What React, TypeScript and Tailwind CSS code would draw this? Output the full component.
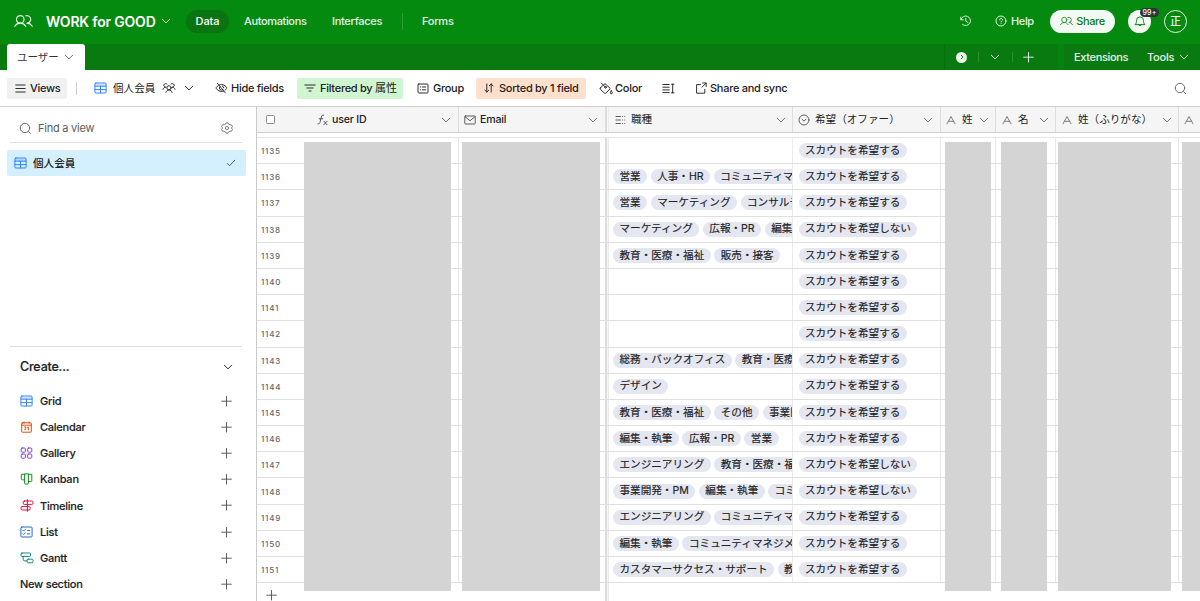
import React from 'react';

type P = { className?: string; children?: React.ReactNode };

const Ico = ({ className = '', children, vb = '0 0 16 16', sw = 0.95 }: P & { vb?: string; sw?: number }) => (
  <svg viewBox={vb} fill="none" stroke="currentColor" strokeWidth={sw} strokeLinecap="round" strokeLinejoin="round" className={'block shrink-0 ' + className}>
    {children}
  </svg>
);

const Chevron = ({ className = '' }: P) => (
  <Ico vb="0 0 10 10" className={'size-2.5 ' + className}><path d="M1.3 3.200 5 6.900l3.700-3.700" /></Ico>
);
const Plus = ({ className = '' }: P) => (
  <Ico vb="0 0 12 12" className={'size-3 ' + className}><path d="M6.500 1.500v9.500M1.700 6.200h9.600" /></Ico>
);
const People = ({ className = '' }: P) => (
  <Ico vb="0 0 20 14" className={className} sw={1.2}>
    <circle cx="6.6" cy="5.3" r="4" />
    <path d="M.8 12.6c1.3-2.1 3.3-3.3 5.8-3.3s4.500 1.200 5.800 3.300M12.300 1.500a4 4 0 1 1 1.300 7.800c2.400 0 4.300 1.200 5.600 3.300" />
  </Ico>
);
const GridIcon = ({ className = '' }: P) => (
  <Ico vb="0 0 13 12" className={'h-3 w-[13px] ' + className}>
    <path d="M1 1.500h11v2.700H1z" fill="currentColor" fillOpacity=".2" stroke="none" />
    <rect x=".9" y="1" width="11.200" height="10" rx="1" />
    <path d="M1 4.200h11M1 7.600h11M6.500 4.200v6.800" />
  </Ico>
);
const Search = ({ className = '' }: P) => (
  <Ico vb="0 0 13 13" className={'size-[13px] ' + className}><circle cx="6" cy="6" r="4.700" /><path d="m9.500 9.500 2.300 2.300" /></Ico>
);
const LetterA = () => (
  <Ico vb="0 0 10 10" className="mr-px size-2.5 text-[#777]"><path d="M1 8.800 5 1.500l4 7.300M2.500 6.300h5" /></Ico>
);

function TopBar() {
  return (
    <header className="flex h-11 shrink-0 items-center bg-[#048a0e] pb-[2px] pl-[14px] pr-[13px] text-[11px] font-medium tracking-[-0.360px] text-white/90">
      <People className="h-[14px] w-[19px]" />
      <span className="ml-[13px] w-[111px] whitespace-nowrap text-[14px] font-semibold tracking-[-0.200px] text-white">WORK for GOOD</span>
      <Chevron className="ml-1" />
      <span className="ml-[15px] flex h-[23px] w-[43px] items-center justify-center rounded-full bg-[#0a7411] tracking-[-0.100px] text-white">Data</span>
      <span className="ml-[15px] w-[63px]">Automations</span>
      <span className="ml-[25px] w-[51px] tracking-[-0.300px]">Interfaces</span>
      <span className="ml-[19px] h-[17px] w-px bg-[#2f9c37]" />
      <span className="ml-[19px] tracking-[-0.250px]">Forms</span>
      <div className="ml-auto flex items-center">
        <Ico vb="0 0 12 12" className="mr-px size-3"><path d="M.8 2.200v2.600h2.600M1 4.600A4.800 4.800 0 1 1 2.600 9.500M5.800 3.400v2.800l2.200 1.300" /></Ico>
        <Ico vb="0 0 12 12" className="ml-[22px] size-3"><circle cx="6" cy="6" r="5" /><path d="M4.600 4.800c0-2 2.900-1.800 2.900 0 0 1-1.500 1.100-1.500 2.100M6 8.600v.1" /></Ico>
        <span className="ml-1 w-[23px]">Help</span>
        <span className="ml-[16px] flex h-[23px] w-[65px] items-center justify-center gap-[3px] rounded-full bg-[#f3faf3] text-[#0a7b14]">
          <People className="h-[10px] w-[13px]" />Share
        </span>
        <div className="relative ml-[13px] flex size-[23px] items-center justify-center rounded-full bg-[#f3faf3] text-[#0a7b14]">
          <Ico vb="0 0 12 13" className="h-[13px] w-3"><path d="M1.300 9.400c.9-.9 1.200-2 1.200-4a3.500 3.500 0 0 1 7 0c0 2 .3 3.100 1.200 4zM4.600 9.600a1.450 1.450 0 0 0 2.800 0" /></Ico>
          <span className="absolute -top-[2px] left-3 flex h-[9px] w-[19px] items-center justify-center rounded-full bg-[#2c3438] text-[7px] font-medium leading-none tracking-[0.200px] text-white">99+</span>
        </div>
        <span className="ml-[13px] flex size-[23px] items-center justify-center rounded-full border border-white/90 text-[11px] leading-none tracking-[0px]">正</span>
      </div>
    </header>
  );
}

function TableTabs() {
  return (
    <div className="flex h-[26px] shrink-0 bg-[#087a10] text-[11px] font-medium tracking-[-0.340px] text-white/90">
      <div className="ml-[7px] flex w-[78px] items-center rounded-t-[3px] bg-white pl-[10px] text-[#333]">
        <span className="w-[42px] whitespace-nowrap pt-[2px] text-[10.500px] font-normal tracking-[0px]">ユーザー</span>
        <Chevron className="ml-[5px] text-[#666]" />
      </div>
      <div className="ml-auto flex w-[114px] items-center border-l border-[#06700d] pl-[11px]">
        <span className="flex size-[11px] items-center justify-center rounded-full bg-[#eaf6ea] text-[#087a10]">
          <Ico vb="0 0 6 6" className="size-[6px]"><path d="M2.200 1.200 4 3 2.200 4.800" /></Ico>
        </span>
        <span className="ml-[11px] h-[10px] w-px bg-[#2a8f31]" />
        <Chevron className="ml-[11px]" />
        <span className="ml-[12px] h-[10px] w-px bg-[#2a8f31]" />
        <Plus className="ml-[9px] size-3" />
      </div>
      <div className="w-[6px] bg-[#07820f]" />
      <div className="flex w-[136px] items-center pl-[10px]">
        <span className="w-[54px]">Extensions</span>
        <span className="ml-[19px] w-[27px] tracking-[-0.200px]">Tools</span>
        <Chevron className="ml-[5px]" />
      </div>
    </div>
  );
}

function Toolbar() {
  return (
    <div className="flex h-[37px] shrink-0 items-center whitespace-nowrap border-b border-[#cfcfcf] bg-white pl-[7px] pr-[13px] text-[11px] font-medium tracking-[-0.280px] text-[#222]">
      <div className="flex h-[21px] w-[60px] items-center rounded-[2px] bg-[#f1f1f1] pl-2">
        <Ico vb="0 0 11 11" className="size-[11px]"><path d="M.8 2h9.400M.8 5.500h9.400M.8 9h9.400" /></Ico>
        <span className="ml-1">Views</span>
      </div>
      <span className="ml-[9px] h-[13px] w-px bg-[#ccc]" />
      <GridIcon className="ml-[17px] text-[#2d7ff9]" />
      <span className="ml-[6px] w-[43px] pt-px text-[10.600px] font-normal tracking-[0px]">個人会員</span>
      <Ico vb="0 0 14 12" className="ml-[6px] h-3 w-[14px]">
        <circle cx="7" cy="5.800" r="2.100" />
        <path d="M3.900 10.400c.5-1.500 1.700-2.500 3.100-2.500s2.600 1 3.100 2.500M3.900 5.300A1.900 1.900 0 1 1 5 2M1 7.300c.4-1.200 1.200-2 2.400-2M10.100 5.300A1.900 1.900 0 1 0 9 2M13 7.300c-.4-1.200-1.200-2-2.400-2" />
      </Ico>
      <Chevron className="ml-[8px]" />
      <Ico vb="0 0 13 12" className="ml-[21px] h-3 w-[13px]">
        <path d="M2.300 1.200 10.300 10.800M4.400 2.900A6 6 0 0 1 6.500 2.500c3.600 0 5.500 3.500 5.500 3.500s-.7 1.300-2 2.300M8.500 9.200a6 6 0 0 1-2 .3C2.900 9.500 1 6 1 6s.8-1.500 2.300-2.500M8.100 7.600a2.200 2.200 0 0 1-3.200-3M7.300 3.900A2.200 2.200 0 0 1 8.700 5.800" />
      </Ico>
      <span className="ml-[3px] w-[53px]">Hide fields</span>
      <div className="ml-[13px] flex h-[21px] w-[106px] items-center rounded-[2px] bg-[#cff5d1] pl-[7px]">
        <Ico vb="0 0 12 10" className="h-[10px] w-3"><path d="M.8 2h10.400M2.800 5h6.400M4.900 8h2.200" /></Ico>
        <span className="ml-[4px]">Filtered by <span className="font-normal tracking-[0px]">属性</span></span>
      </div>
      <Ico vb="0 0 12 11" className="ml-[14px] h-[11px] w-3"><rect x="1" y="1" width="10" height="9" rx=".8" /><path d="M3.300 4h.3M5.300 4h3.400M3.300 6.800h.3M5.300 6.800h3.400" /></Ico>
      <span className="ml-1 w-[31px]">Group</span>
      <div className="ml-[12px] flex h-[21px] w-[110px] items-center rounded-[2px] bg-[#ffe0cc] pl-2">
        <Ico vb="0 0 10 10" className="size-2.5"><path d="M2.800 1v8M.9 7.200 2.800 9l1.900-1.800M7.200 9V1M5.300 2.800 7.200 1l1.900 1.800" /></Ico>
        <span className="ml-[5px]">Sorted by 1 field</span>
      </div>
      <Ico vb="0 0 14 13" className="ml-[13px] h-[13px] w-[14px]">
        <path d="M2.300 1 5.800 4.500M1.300 6 6 1.600l5.300 5-4.600 4.600a.8.800 0 0 1-1.200 0L1.300 7.200a.8.800 0 0 1 0-1.200zM12.300 8.800s1 1.200 1 2a1 1 0 0 1-2 0c0-.8 1-2 1-2z" /><circle cx="6.400" cy="5.200" r=".9" />
      </Ico>
      <span className="ml-[2px] w-[27px]">Color</span>
      <Ico vb="0 0 13 11" className="ml-[20px] h-[11px] w-[13px]"><path d="M.8 1.500h6.400M.8 4.200h6.400M.8 6.900h6.400M.8 9.600h6.400M10.700 1.200v8.600M9.500 1.200h2.400M9.500 9.800h2.400" /></Ico>
      <Ico vb="0 0 12 12" className="ml-[20px] size-3"><path d="M5.500 2.600H1.600v8.600h8.200V7.300M7.700 1h3.500v3.500M11 1.200 6.900 5.300" /></Ico>
      <span className="ml-[3px]">Share and sync</span>
      <Search className="ml-auto text-[#666]" />
    </div>
  );
}

const icons: Record<string, React.ReactNode> = {
  Grid: <GridIcon className="text-[#2d7ff9]" />,
  Calendar: (
    <Ico vb="0 0 13 12" className="h-3 w-[13px] text-[#d54401]"><rect x="1.700" y="1.800" width="9.600" height="9.400" rx=".6" /><path d="M1.700 4.200h9.600M4 .8v1.400M9 .8v1.400M4.600 6h1.500L5.300 7.200c1.200 0 1.100 1.900-.7 1.500M7.600 6.500l.8-.5v2.900" strokeWidth=".9" /></Ico>
  ),
  Gallery: (
    <Ico vb="0 0 13 12" className="h-3 w-[13px] text-[#7c39ed]"><rect x="1.200" y="1" width="4.200" height="4.200" rx="1" /><rect x="7.600" y="1" width="4.200" height="4.200" rx="1" /><rect x="1.200" y="7" width="4.200" height="4.200" rx="1" /><rect x="7.600" y="7" width="4.200" height="4.200" rx="1" /></Ico>
  ),
  Kanban: (
    <Ico vb="0 0 13 12" className="h-3 w-[13px] text-[#048a0e]"><path d="M4.600 1.300H1.300v4.500a1 1 0 0 0 1 1h2.300M4.600 1.300v8.800a1 1 0 0 0 1 1h1.800a1 1 0 0 0 1-1V1.300zM8.400 1.300h3.400v6.200a1 1 0 0 1-1 1H8.400" /></Ico>
  ),
  Timeline: (
    <Ico vb="0 0 14 13" className="h-[13px] w-[14px] text-[#dc043b]"><path d="M7.400.6v11.800" /><rect x="3.200" y="2" width="9.800" height="3.400" rx="1.200" /><rect x="1" y="7.600" width="9.200" height="3.400" rx="1.200" /></Ico>
  ),
  List: (
    <Ico vb="0 0 13 12" className="h-3 w-[13px] text-[#1f62d0]"><rect x=".9" y="1" width="11.200" height="10" rx="1" /><path d="m3 4.400.7.700 1.500-1.600M7.500 4.400h2.300M3 7.800l.7.700 1.500-1.600M7.500 7.800h2.300" /></Ico>
  ),
  Gantt: (
    <Ico vb="0 0 14 12" className="h-3 w-[14px] text-[#0d7f78]"><rect x="1" y="1" width="9.500" height="3.400" rx="1" /><rect x="7" y="7.200" width="6" height="3.600" rx="1.200" /><path d="M3.200 4.400v2.900a1.600 1.600 0 0 0 1.600 1.600H7" /></Ico>
  ),
};

function Sidebar() {
  return (
    <aside className="flex w-[257px] shrink-0 flex-col border-r border-[#cacaca] bg-white text-[11px] font-medium tracking-[-0.240px] text-[#1d1f25]">
      <div className="ml-[10px] mr-[14px] flex h-9 items-center border-b border-[#e2e2e2] pl-[9px] pr-[9px] pt-[7px]">
        <Search className="text-[#666]" />
        <span className="ml-[6px] font-normal text-[#5c5c5c]">Find a view</span>
        <Ico vb="0 0 12 12" className="ml-auto size-3 text-[#777]"><path d="M4.300 2.200 5 .9h2l.7 1.300 1.500.5 1.300.1.900 1.700-.9 1.500.9 1.500-.9 1.700-1.300.1-1.500.5L7 11.100H5l-.7-1.300-1.500-.5-1.300-.1-.9-1.700.9-1.500-.9-1.500.9-1.700 1.300-.1z" /><circle cx="6" cy="6" r="1.600" /></Ico>
      </div>
      <div className="ml-[7px] mt-[7px] flex h-[26px] w-[239px] items-center rounded-[2px] bg-[#d4effd] pl-[7px] pr-[10px]">
        <GridIcon className="text-[#2d7ff9]" />
        <span className="ml-[6px] pt-px text-[10.600px] tracking-[0px] text-[#222]">個人会員</span>
        <Ico vb="0 0 10 10" className="ml-auto size-2.5 text-[#555]"><path d="m1.200 5.500 2.300 2.300L8.800 2.200" /></Ico>
      </div>
      <div className="ml-[10px] mr-[14px] mt-auto border-t border-[#ddd]" />
      <div className="flex h-[41px] items-center pl-5 pr-[23px] text-[12.500px] tracking-[-0.200px] [-webkit-text-stroke:0.2px]">
        <span className="pt-px">Create...</span><Chevron className="ml-auto" />
      </div>
      <div className="pb-[4px] [-webkit-text-stroke:0.15px]">
        {Object.keys(icons).map((k) => (
          <div key={k} className="flex h-[26.200px] items-center pl-5 pr-[24px]">
            <span className="flex w-5 shrink-0">{icons[k]}</span>
            <span className="pt-px">{k}</span>
            <Plus className="ml-auto text-[#555]" />
          </div>
        ))}
        <div className="flex h-[26.200px] items-center pl-5 pr-[24px]">New section<Plus className="ml-auto text-[#555]" /></div>
      </div>
    </aside>
  );
}

const yes = 'スカウトを希望する';
const no = 'スカウトを希望しない';
const rows: [string[], string][] = [
  [[], yes],
  [['営業', '人事・HR', 'コミュニティマネジメント'], yes],
  [['営業', 'マーケティング', 'コンサルティング'], yes],
  [['マーケティング', '広報・PR', '編集・執筆'], no],
  [['教育・医療・福祉', '販売・接客'], yes],
  [[], yes],
  [[], yes],
  [[], yes],
  [['総務・バックオフィス', '教育・医療・福祉'], yes],
  [['デザイン'], yes],
  [['教育・医療・福祉', 'その他', '事業開発・PM'], yes],
  [['編集・執筆', '広報・PR', '営業'], yes],
  [['エンジニアリング', '教育・医療・福祉'], no],
  [['事業開発・PM', '編集・執筆', 'コミュニティマネジメント'], no],
  [['エンジニアリング', 'コミュニティマネジメント'], yes],
  [['編集・執筆', 'コミュニティマネジメント'], yes],
  [['カスタマーサクセス・サポート', '教育・医療・福祉'], yes],
];

const Chip = ({ children }: P) => (
  <span className="flex h-[15px] shrink-0 items-center whitespace-nowrap rounded-full bg-[#e4e6f0] px-[6.500px] pt-px text-[10.600px] font-normal leading-none text-[#222] [-webkit-text-stroke:0.15px]">{children}</span>
);

const HeadCell = ({ className = '', icon, label }: { className?: string; icon: React.ReactNode; label: string }) => (
  <div className={'flex shrink-0 items-center whitespace-nowrap border-r border-[#dedede] ' + className}>
    {icon}
    <span className="ml-[5px] pt-px">{label}</span>
    <Chevron className="ml-auto text-[#666]" />
  </div>
);

const Divider = () => <div className="w-1 shrink-0 border-l-2 border-r border-l-[#dcdcdc] border-r-[#ececec] bg-[#f7f7f7]" />;

function DataGrid() {
  return (
    <main className="relative min-w-0 flex-1 overflow-hidden bg-white text-[10.600px] text-[#222]">
      <div className="flex h-[26px] w-max border-b border-[#cfcfcf] bg-[#f5f5f5]">
        <div className="flex w-[47px] items-center pl-[9px]"><span className="size-[9px] rounded-[1.500px] border border-[#8c8c8c] bg-white" /></div>
        <HeadCell className="w-[155px] pl-[13px] pr-[7px] font-medium tracking-[-0.200px]" label="user ID" icon={<Ico vb="0 0 12 12" className="-mr-[2px] size-3 text-[#555]"><path d="M1 9.800c1.400.5 1.900-.6 2.200-2L4.300 3c.3-1.500 1-2.200 2.400-1.800M2.200 4.800h3.500M6.800 7.200l3.300 3.600M10.200 7.200l-3.500 3.600" /></Ico>} />
        <HeadCell className="w-[146px] border-r-0 pl-[5px] pr-[7px] font-medium tracking-[-0.200px]" label="Email" icon={<Ico vb="0 0 12 10" className="-mr-px h-2.5 w-3 text-[#555]"><rect x=".8" y="1" width="10.400" height="8" rx=".6" /><path d="m1 1.600 5 4.200 5-4.200" /></Ico>} />
        <Divider />
        <HeadCell className="w-[184px] pl-[6px] pr-[6px]" label="職種" icon={<Ico vb="0 0 11 10" className="h-2.5 w-[11px] text-[#555]"><path d="M1 1.500h4.500M1 5h4.500M1 8.500h4.500M7.600 1.500h.1M9.700 1.500h.1M7.600 5h.1M9.700 5h.1M7.600 8.500h.1M9.700 8.500h.1" /></Ico>} />
        <HeadCell className="w-[148px] pl-[5px] pr-[7px]" label="希望（オファー）" icon={<Ico vb="0 0 12 12" className="size-3 text-[#555]"><circle cx="6" cy="6" r="5" /><path d="m4 5.200 2 2 2-2" /></Ico>} />
        <HeadCell className="w-[55px] pl-[5px] pr-[6px]" label="姓" icon={<LetterA />} />
        <HeadCell className="w-[60px] pl-[6px] pr-[6px]" label="名" icon={<LetterA />} />
        <HeadCell className="w-[123px] pl-[6px] pr-[6px]" label="姓（ふりがな）" icon={<LetterA />} />
        <div className="flex w-[80px] items-center pl-[5px]"><LetterA /></div>
      </div>
      <div className="h-[5px] border-b border-[#e6e6e6]" />
      {rows.map(([tags, scout], i) => (
        <div key={i} className="flex h-[26.190px] w-max border-b border-[#e0e0e0]">
          <div className="flex w-[202px] shrink-0 items-center border-r border-[#e9e9e9] pl-[4px] pt-px text-[8px] font-medium tracking-[0.800px] text-[#666]">
            {1135 + i}
          </div>
          <div className="w-[146px]" />
          <Divider />
          <div className="flex w-[184px] shrink-0 items-center gap-[3.500px] overflow-hidden border-r border-[#ececec] pl-1">
            {tags.map((t) => <Chip key={t}>{t}</Chip>)}
          </div>
          <div className="flex w-[148px] shrink-0 items-center border-r border-[#e9e9e9] pl-[5.500px]"><Chip>{scout}</Chip></div>
          <div className="w-[55px] border-r border-[#e9e9e9]" />
          <div className="w-[60px] border-r border-[#e9e9e9]" />
          <div className="w-[123px] border-r border-[#e9e9e9]" />
          <div className="w-[80px]" />
        </div>
      ))}
      <div className="flex h-10">
        <div className="w-[348px] pl-[8px] pt-[6px]"><Plus className="text-[#555]" /></div>
        <Divider />
      </div>
      <div className="absolute left-[47px] top-[35px] h-[449px] w-[147px] bg-[#d4d4d4]" />
      <div className="absolute left-[205px] top-[35px] h-[449px] w-[138px] bg-[#d4d4d4]" />
      <div className="absolute left-[688px] top-[35px] h-[449px] w-[46px] bg-[#d4d4d4]" />
      <div className="absolute left-[744px] top-[35px] h-[449px] w-[46px] bg-[#d4d4d4]" />
      <div className="absolute left-[801px] top-[35px] h-[449px] w-[113px] bg-[#d4d4d4]" />
      <div className="absolute left-[925px] top-[35px] h-[449px] w-[30px] bg-[#d4d4d4]" />
    </main>
  );
}

export default function App() {
  return (
    <div className="flex h-[601px] w-[1200px] flex-col overflow-hidden bg-white [font-family:Inter,'Noto_Sans_CJK_JP',sans-serif]">
      <TopBar />
      <TableTabs />
      <Toolbar />
      <div className="flex min-h-0 flex-1">
        <Sidebar />
        <DataGrid />
      </div>
    </div>
  );
}
